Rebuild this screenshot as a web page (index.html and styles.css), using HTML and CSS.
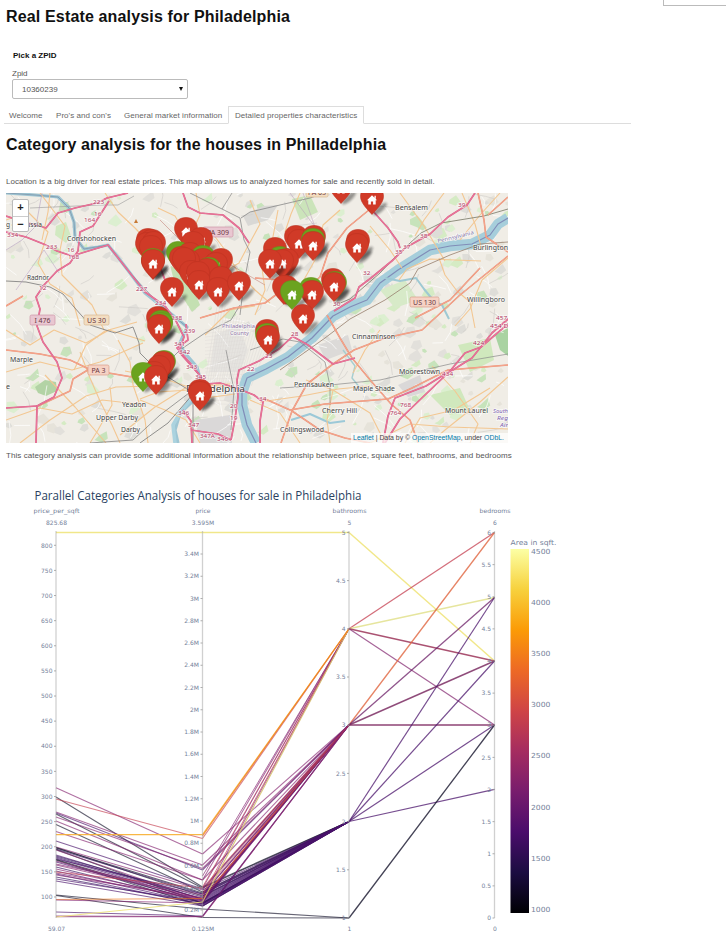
FILE: index.html
```html
<!DOCTYPE html>
<html lang="en">
<head>
<meta charset="utf-8">
<title>Real Estate analysis for Philadelphia</title>
<link rel="stylesheet" href="styles.css">
</head>
<body>
<header class="top">
  <h1>Real Estate analysis for Philadelphia</h1>
  <div class="side-box"></div>
</header>
<section class="picker">
  <strong>Pick a ZPID</strong>
  <label>Zpid</label>
  <div class="select"><span>10360239</span><i class="caret"></i></div>
</section>
<nav class="tabs">
  <a class="t1">Welcome</a><a class="t2">Pro's and con's</a><a class="t3">General market information</a><a class="active">Detailed properties characteristics</a>
</nav>
<main>
  <h2>Category analysis for the houses in Philladelphia</h2>
  <p class="intro">Location is a big driver for real estate prices. This map allows us to analyzed homes for sale and recently sold in detail.</p>
  <div class="map">
    <svg id="map" width="502" height="250" viewBox="6 193 502 250"></svg>
    <div class="zoom"><span>+</span><span>−</span></div>
    <div class="credit"><a>Leaflet</a> | Data by © <a>OpenStreetMap</a>, under <a>ODbL.</a></div>
  </div>
  <p class="note">This category analysis can provide some additional information about the relationship between price, square feet, bathrooms, and bedrooms</p>
  <svg id="chart" width="580" height="460" viewBox="0 480 580 460"></svg>
</main>
<script src="app.js"></script>
</body>
</html>
```
FILE: styles.css
```css
* { box-sizing: border-box; }
body { margin: 0; width: 726px; height: 952px; overflow: hidden; background: #fff; font-family: "Liberation Sans", sans-serif; color: #555; }
h1, h2, p { margin: 0; font-weight: normal; white-space: nowrap; }
h1, h2 { font-size: 16px; line-height: 20px; font-weight: bold; color: #111; letter-spacing: .155px; }
h1 { padding: 7px 0 0 6px; }
.top { display: flex; justify-content: space-between; height: 49px; }
.side-box { width: 63px; height: 6px; border: 1px solid #bbb; border-width: 0 0 1px 1px; }
.picker { padding-left: 12px; height: 57px; font-size: 8px; display: flex; flex-direction: column; }
.picker strong { color: #111; line-height: 14px; padding-left: 1px; }
.picker label { line-height: 10px; margin-top: 6px; }
.select { width: 176px; height: 20px; border: 1px solid #bbb; border-radius: 2px; display: flex; justify-content: space-between; align-items: center; padding: 0 4px 0 9px; }
.caret { border: 2.5px solid transparent; border-top: 4px solid #111; border-bottom: 0; }
.tabs { margin-left: 4px; width: 627px; height: 18px; border-bottom: 1px solid #ddd; display: flex; font-size: 8px; line-height: 20px; white-space: nowrap; color: #666; letter-spacing: .05px; }
.tabs a { height: 18px; padding-left: 5px; }
.t1 { width: 47px; }
.t2 { width: 68px; }
.t3 { width: 109px; }
.tabs .active { width: 136px; padding-left: 6px; border: 1px solid #ddd; border-bottom-color: #fff; line-height: 18px; }
main { padding-left: 6px; }
h2 { margin-top: 11px; letter-spacing: .14px; }
.intro { font-size: 8px; line-height: 12px; margin-top: 21px; letter-spacing: .074px; }
.map { position: relative; width: 502px; height: 250px; margin-top: 5px; overflow: hidden; }
.map svg, #chart { display: block; }
.zoom { position: absolute; left: 6px; top: 6px; width: 17px; height: 33px; background: #fff; border: 1px solid #bbb; border-radius: 2px; font: bold 11px/15px "Liberation Sans", sans-serif; color: #222; text-align: center; }
.zoom span { display: block; height: 16px; }
.zoom span + span { border-top: 1px solid #ccc; }
.credit { position: absolute; right: 0; bottom: 0; height: 10px; padding: 0 4px 0 2px; background: rgba(255,255,255,.7); font-size: 6.9px; line-height: 10px; color: #444; white-space: nowrap; }
.credit a { color: #0078a8; }
.note { font-size: 8px; line-height: 12px; margin: 7px 0 18px; letter-spacing: .073px; }
#chart { margin-left: -6px; }
#map text { font-family: "Noto Sans", sans-serif; }
#chart text { font-family: "DejaVu Sans", sans-serif; fill: #74819a; }
#chart .title { font-family: "Open Sans", sans-serif; font-size: 12px; fill: #2a3f5f; }
```
FILE: app.js
```js
const map = document.getElementById('map');
const chart = document.getElementById('chart');
let seed = 7;
const rnd = () => (seed = (seed * 16807) % 2147483647) / 2147483647;
const out = [];
const line = (pts, color, w, extra = '') => out.push(`<polyline points="${pts}" fill="none" stroke="${color}" stroke-width="${w}" stroke-linejoin="round" ${extra}/>`);

// Land cover
out.push('<rect x="6" y="193" width="502" height="250" fill="#f0ede6"/>');
const covers = ['#d5ebc4', '#dcefd0', '#c7e3bb', '#deddd8', '#e2e0db', '#e6e3da'];
for (let i = 0; i < 330; i++) {
  const x = 6 + rnd() * 502, y = 193 + rnd() * 250, s = 2 + rnd() * 6;
  out.push(`<path d="M${x} ${y}l${s} ${-s * rnd()}l${s * rnd()} ${s}l${-s * .8} ${s * .6}l${-s} ${-s * .4}z" fill="${covers[Math.floor(rnd() * 6)]}"/>`);
}
[['35,387 45,380 56,382 57,391 46,396 38,393', '#b3d3a5'], ['56,226 66,222 71,236 66,243 55,235', '#d1e9c1'], ['170,265 190,280 200,305 192,312 175,285', '#c4e0b2'],
 ['495,335 508,328 508,356 500,350', '#a9d3a2'], ['215,335 238,325 248,350 240,372 210,372', '#e6e4e0'], ['243,216 263,206 278,205 268,220 248,226', '#d9d8d5'],
 ['195,420 230,415 232,443 200,443', '#dad8d8'], ['318,345 348,335 352,350 326,360', '#dcdad8'], ['398,385 420,375 425,392 408,397', '#dad8d8'],
 ['458,345 490,338 494,360 470,372', '#d0e8bd'], ['430,395 460,388 470,410 450,415', '#d0e8bd'], ['380,290 405,280 418,300 395,308', '#d7eac8'], ['292,199 310,195 318,212 300,220', '#cbe4ba']
].forEach(a => out.push(`<polygon points="${a[0]}" fill="${a[1]}"/>`));

// Street grid
for (let i = 0; i < 230; i++) {
  const x = 6 + rnd() * 502, y = 193 + rnd() * 250, a = rnd() * 6.28, l = 8 + rnd() * 24;
  line(`${x},${y} ${x + Math.cos(a) * l * .5 + 2},${y + Math.sin(a) * l * .5} ${x + Math.cos(a) * l},${y + Math.sin(a) * l}`, i % 3 ? '#fff' : '#d3d0cb', .7);
}
for (let i = 0; i < 22; i++) {
  line(`${205 + i * 2.2},${385 + i % 4} ${218 + i * 2.4},${300 + i * 2}`, '#d9d6d3', .4);
  line(`${205},${330 + i * 3.5} ${245},${325 + i * 3.8}`, '#dddad7', .4);
}

// Water
line('6,193 35,195 58,197 69,208 74,222 75,237 84,249 98,247 108,245 117,256 130,273 145,293 160,305 175,317 187,327 180,343 184,352 197,367 201,382 194,400 180,413 175,430 178,443', '#9ec6d4', 3.2);
line('6,193 35,195 58,197 69,208 74,222 75,237 84,249 108,245 130,273 160,305 187,327', '#8096aa', .8);
line('256,443 247,425 242,405 242,393 247,378 266,369 288,357 312,338 333,316 350,307 367,300 380,283 398,270 430,250 450,246 472,244 490,235 498,224 508,218', '#a6cedb', 10.5);
line('256,443 247,425 242,405 242,393 247,378 266,369 288,357 312,338 333,316 350,307 367,300 380,283 398,270 430,250 450,246 472,244 490,235 498,224 508,218', '#818db8', 1.2);
line('385,278 400,281 416,278 424,289 433,300 442,305 449,319', '#9ec9d3', 2);
line('343,350 355,366 352,378 361,389 373,390', '#a6ced0', 1.4);
line('291,420 310,414 330,423 345,421', '#9cc9d8', 2);
line('190,400 180,413 173,425 175,443', '#abd3df', 3.6);

// Secondary roads
['40,193 65,226 60,250 62,275 92,305 104,330', '6,220 28,212 48,232 38,263 50,284 72,298 80,326', '105,193 118,212 135,228 156,250', '50,193 48,212 42,240',
 '6,372 40,362 72,370 100,362 143,343', '6,330 30,345 54,330 86,343 109,330 145,341', '74,370 86,345 105,331 137,322', '80,352 90,378 100,401 112,425 120,443', '20,443 50,420 86,396 116,387 155,386',
 '118,340 130,362 133,385 145,420 148,443', '110,387 112,405 98,430 90,443', '140,400 165,410 186,420 200,443', '45,375 75,407 106,443', '6,420 40,408 72,414 102,400 138,404',
 '250,200 260,224 248,246 239,263 210,280', '210,230 225,250 238,272 255,290 270,303', '278,210 272,242 262,268 265,290 255,315', '300,193 291,214 285,232', '340,210 323,225 315,260 301,285', '400,193 424,226 445,261', '370,226 390,250 402,268', '444,193 424,220 415,236',
 '439,258 445,275 457,291 470,302 475,328', '399,280 407,269 430,259 455,260 481,261', '306,380 333,390 370,413 385,443', '260,402 302,396 338,389 370,386', '333,390 327,420 330,443', '250,400 280,413 300,443', '380,330 365,350 353,373',
 '432,366 455,391 478,424 470,443', '508,377 480,402 445,430 430,443', '370,443 410,424 450,427 508,429', '462,193 475,224 482,250', '508,258 482,280 470,309 455,326', '405,443 420,418 454,410 490,388', '500,193 480,215 460,240', '205,335 230,310 255,306', '196,193 200,215 193,230', '158,208 175,216 184,231', '205,398 235,394', '200,384 238,388', '120,435 155,407 190,385 230,384', '125,371 165,379 200,391', '140,399 158,392 205,389'
].forEach(p => line(p, '#f3c792', 1.1));

// Railways
line('6,281 26,282 50,287 63,294 74,307', '#777', .8);
line('74,307 90,325 115,333 133,327 139,343 140,353 152,365 163,374 205,400', '#777', .8);
line('190,193 210,203 222,209 240,218 244,240 250,252 244,282 240,315', '#8b8b8b', .8);
line('222,209 232,193', '#888', .7);
line('241,218 250,212 310,198 325,193', '#888', .8);
line('155,375 180,350 205,333 231,320 240,305', '#888', .8);
line('508,209 484,216 441,223 421,233 398,254 380,273 350,299 333,306', '#776', .8);
line('508,242 480,244 450,255 418,269 410,283 385,300 350,319 325,338 280,370', '#977f6d', .8);
line('250,350 283,339 300,342 325,362 330,386 330,405', '#888', .7);
line('280,388 330,385 380,380 450,364 508,354', '#8a8a8a', .7);
line('90,443 133,440 160,415 189,393', '#777', .7);
line('140,443 168,423 193,394 193,443', '#777', .8);
line('30,208 100,205 118,205 134,196', '#999', .6);
line('226,350 234,390 231,430', '#888', .7);
line('6,250 22,240 36,226 42,193', '#aa92bb', .5);
line('16,290 44,250 59,273', '#b59bc2', .5);
line('160,220 180,240 205,250 265,285', '#cc958c', .7);
line('290,193 315,227 303,193', '#b69abb', .5);

// Trunk roads
['6,350 40,354 70,360 91,370 132,377 154,380', '36,407 70,391 73,379 91,368', '375,205 347,228 328,253 320,277 311,285', '508,256 460,295 422,330 385,338 354,350 333,364 307,384 292,411 281,443',
 '327,315 340,338 352,358 371,381 391,404 410,420 418,443', '263,398 290,410 325,404 388,399 412,388 448,370 508,365', '292,411 320,430 345,438 370,443', '478,193 484,220 486,237 508,252', '200,318 234,308 265,303 277,294', '6,306 23,296', '508,197 488,215', '415,318 450,300 480,268', '255,278 280,280 300,285'
].forEach(p => { line(p, '#e8937a', 1.6); line(p, '#f6a58c', 1); });

// Motorways
['6,216 25,222 46,228 58,213 75,208 97,203 107,198 128,193', '6,232 26,237 46,245 57,251 72,256 85,252 108,245 130,273 145,292 165,306 176,321 184,337 179,352 195,370 206,382', '109,201 93,226 80,232 78,251 70,263 57,271 44,285 36,297 40,309 37,326 43,342 57,362 62,378 54,397 37,406 36,443',
 '37,406 6,408', '183,193 188,207 200,213 223,215 239,228 249,243', '186,324 188,340 177,348 191,364 201,377 199,384', '183,410 191,421 192,443', '191,430 218,434 231,440', '231,440 235,419 238,397 237,380 239,370 259,361 279,349 292,337', '206,384 220,383 239,389 254,395 263,402 260,421 260,443', '292,336 308,345 333,364 355,358', '372,210 388,228 398,242 400,248', '475,193 467,205 448,217 430,234 405,248 393,260 371,278 359,287 355,298 334,311', '508,319 492,333 472,358 448,373 426,394 400,419 385,443', '508,324 481,347 465,353 450,371 426,386 395,398 388,416 383,443', '155,254 165,280'
].forEach(p => { line(p, '#d65e87', 1.7); line(p, '#ea7599', 1.1); });

const txt = (x, y, s, size, w, fill = '#444', extra = '') => out.push(`<text x="${x}" y="${y}" font-size="${size}" textLength="${w}" lengthAdjust="spacingAndGlyphs" fill="${fill}" stroke="#fff" stroke-opacity=".65" stroke-width="1.4" paint-order="stroke" ${extra}>${s}</text>`);
[[93, 204, 223], [94, 216, 16], [84, 222, 164], [46, 249, 233], [67, 252, 16], [68, 259, 168], [39, 290, 12], [136, 291, 227], [155, 305, 234], [171, 320, 238], [184, 333, 239], [174, 346, 341], [179, 354, 342], [186, 369, 343], [195, 379, 345], [178, 415, 346], [188, 427, 347], [200, 438, '347A'], [217, 441, 346], [230, 408, 20], [230, 420, 19], [259, 401, 34], [291, 336, 28], [265, 358, 23], [247, 371, 22], [333, 306, 30], [363, 275, 32], [395, 254, 35], [403, 249, 37], [420, 238, 38], [458, 207, 39], [473, 345, 424], [442, 376, 434], [490, 328, '454 D'], [496, 320, 457], [390, 415, 764], [400, 407, 768], [7, 237, 334]
].forEach(l => txt(l[0], l[1], l[2], 6, String(l[2]).length * 3.7, '#b13a63'));
const shield = (x, y, w, s, bg, br) => {
  out.push(`<rect x="${x}" y="${y}" width="${w}" height="10" rx="1.5" fill="${bg}" stroke="${br}" stroke-width=".7"/>`);
  out.push(`<text x="${x + w / 2}" y="${y + 7.6}" font-size="7" text-anchor="middle" fill="#6b3944">${s}</text>`);
};
shield(30, 315, 25, 'I 476', '#e9c7d1', '#cf96a8');
shield(84, 315, 25, 'US 30', '#f3ddc1', '#d7b894');
shield(88, 365, 21, 'PA 3', '#f6d2c4', '#d99f8b');
shield(203, 227, 30, 'PA 309', '#e9c7d1', '#cf96a8');
shield(410, 297, 29, 'US 130', '#f6d2c4', '#d99f8b');
shield(306, 187, 22, 'PA 63', '#f3ddc1', '#d7b894');
txt(67, 241, 'Conshohocken', 7.2, 49);
txt(6, 227, 'g of Prussia', 7.2, 36);
txt(27, 280, 'Radnor', 7.2, 22);
txt(10, 362, 'Marple', 7.2, 23);
txt(6, 389, 'e', 7.2, 4);
txt(122, 407, 'Yeadon', 7, 24);
txt(96, 420, 'Upper Darby', 7, 42);
txt(121, 432, 'Darby', 7, 19);
txt(186, 392, 'Philadelphia', 9.5, 59);
txt(395, 210, 'Bensalem', 7, 33);
txt(473, 250, 'Burlington', 7, 35);
txt(467, 302, 'Willingboro', 7, 38);
txt(352, 339, 'Cinnaminson', 7, 43);
txt(399, 374, 'Moorestown', 7, 41);
txt(294, 387, 'Pennsauken', 7, 40);
txt(353, 391, 'Maple Shade', 7, 42);
txt(322, 413, 'Cherry Hill', 7, 35);
txt(280, 432, 'Collingswood', 7, 44);
txt(445, 413, 'Mount Laurel', 7, 43);
txt(222, 328, 'Philadelphia', 6, 33, '#9178a8');
txt(230, 335, 'County', 6, 19, '#9178a8');
txt(493, 413, 'South', 5.5, 15, '#7d62b0', 'font-style="italic"');
txt(497, 420, 'Reg', 5.5, 11, '#7d62b0', 'font-style="italic"');
txt(500, 427, 'Air', 5.5, 8, '#7d62b0', 'font-style="italic"');
txt(438, 243, 'Pennsylvania', 5.5, 37, '#8576ae', 'transform="rotate(-14 438 243)"');
out.push('<path d="M134 223l2-4 2 4z" fill="#c77a35"/>');

// Markers: x, y of the icon, colour (g = green), 0 = without icon
const pin = (x, y, c, home = 1) => {
  const f = c === 'g' ? '#6ba31f' : '#d03a27', st = c === 'g' ? '#5f951c' : '#bd3222';
  out.push(`<ellipse cx="${x + 8}" cy="${y + 9}" rx="9" ry="3" fill="#111" opacity=".4" filter="url(#soft)" transform="rotate(-42 ${x + 8} ${y + 9})"/>`);
  out.push(`<path d="M${x} ${y + 14.5}C${x - 4} ${y + 10} ${x - 11.5} ${y + 3} ${x - 11.5} ${y - 3.5}C${x - 11.5} ${y - 10} ${x - 7} ${y - 14.5} ${x} ${y - 14.5}C${x + 7} ${y - 14.5} ${x + 11.5} ${y - 10} ${x + 11.5} ${y - 3.5}C${x + 11.5} ${y + 3} ${x + 4} ${y + 10} ${x} ${y + 14.5}z" fill="${f}" stroke="${st}" stroke-width=".6"/>`);
  if (home) out.push(`<path d="M${x - 5} ${y + .3}L${x} ${y - 4.8}L${x + 2.5} ${y - 2.3}V${y - 4.2}H${x + 3.8}V${y - 1}L${x + 5} ${y + .3}H${x + 3.7}V${y + 4.4}H${x + 1.1}V${y + 1.4}H${x - 1.1}V${y + 4.4}H${x - 3.7}V${y + .3}z" fill="#fff"/>`);
};
out.push('<filter id="soft" x="-30%" y="-60%" width="160%" height="220%"><feGaussianBlur stdDeviation="1"/></filter>');
[[341, 189, 'r'], [372, 200, 'r'],
 [148, 243, 'r', 0], [152, 244, 'r', 0], [147, 247, 'r', 0], [154, 246, 'r', 0], [151, 250, 'r', 0], [153, 263, 'g', 0], [153, 265, 'r', 0], [153, 264, 'r'],
 [186, 232, 'r'], [201, 242, 'r'], [193, 246, 'r', 0], [178, 256, 'g', 0], [190, 257, 'r', 0], [203, 260, 'g', 0], [181, 261, 'r', 0], [203, 263, 'r', 0], [188, 264, 'r', 0], [184, 262, 'r', 0], [221, 263, 'r', 0], [216, 267, 'r'], [209, 272, 'g', 0], [207, 273, 'r', 0], [191, 275, 'r'], [198, 276, 'r'], [199, 285, 'r'], [221, 281, 'r', 0], [218, 292, 'r'], [239, 286, 'r'], [172, 292, 'r'],
 [296, 240, 'r', 0], [299, 244, 'r'], [314, 240, 'r', 0], [313, 243, 'g', 0], [313, 246, 'r'], [358, 244, 'r', 0], [357, 248, 'r'],
 [275, 252, 'r', 0], [280, 261, 'g', 0], [287, 263, 'r'], [282, 264, 'r'], [270, 264, 'r'],
 [333, 283, 'r', 0], [335, 286, 'g', 0], [334, 287, 'r'], [286, 290, 'r', 0], [284, 290, 'r', 0], [311, 292, 'g', 0], [312, 295, 'r'], [292, 295, 'g'], [303, 319, 'r'],
 [158, 321, 'r', 0], [161, 325, 'g', 0], [161, 327, 'g', 0], [159, 329, 'r'], [267, 334, 'r', 0], [267, 338, 'g', 0], [268, 340, 'r'],
 [164, 365, 'g', 0], [163, 366, 'r', 0], [159, 370, 'r', 0], [154, 376, 'r', 0], [143, 377, 'g'], [156, 380, 'r'], [200, 394, 'r', 0], [200, 396, 'r']
].forEach(p => pin(...p));
map.innerHTML = out.join('');

// Parallel coordinates
const c = [];
const X = [56, 202.5, 349, 494.5];
const seg = (i, a, b, color, w = 1.1, o = .65) => c.push(`<line x1="${X[i]}" y1="${a}" x2="${X[i + 1]}" y2="${b}" stroke="${color}" stroke-width="${w}" opacity="${o}"/>`);
const K = '#15132b', P = '#4a136b', D = '#34105c', M = '#852470', R = '#c53f50', O = '#ed751c', Y = '#f0e57e', A = '#f8b031';
const B = { 5: 532.5, 4: 628.8, 3: 725, 2: 821.5, 1: 918 };
// left y, price y, bathrooms, colour
[[787.7, 854, 3, M], [797, 887, 2, K], [799, 838.5, 4, R], [812, 865, 3, M], [813, 870, 3, P], [814, 888, 2, K], [817, 868.5, 3, M], [821, 880, 3, M], [824.5, 892, 2, K], [831.5, 880, 4, M], [841, 889, 3, P], [847, 890, 3, M],
 [847.5, 896, 2, K], [848, 893, 2, K], [849, 894, 2, D], [849.5, 903, 2, K], [850, 900, 3, M], [855, 899, 3, P], [856, 897, 2, D], [857, 899, 2, D], [858, 901, 2, P], [859, 894, 3, P], [859.5, 903, 2, K], [860, 906, 2, K], [861, 900, 3, M], [862, 902, 3, P], [864, 895, 3, M], [865, 898, 4, M], [867, 903, 2, D], [869, 901, 3, M], [871, 904, 2, P], [873, 900, 3, M], [874, 905, 2, P], [872, 888, 3, R], [875, 898, 3, M], [877, 904, 2, D], [879, 902, 3, P], [881, 906, 2, P],
 [895, 909, 1, K], [895.5, 917.5, 1, K], [899.5, 898.5, 3, O], [900, 903, 3, M], [912, 916, 3, P], [916, 916.5, 3, M], [916.8, 916.8, 3, M]
].forEach(r => { seg(0, r[0], r[1], r[3]); seg(1, r[1], B[r[2]], r[3]); });
for (let i = 0; i < 4; i++) seg(1, 892 + i * 3, B[3], i % 2 ? M : R, 1, .5);
for (let i = 0; i < 9; i++) seg(1, 890 + i * 2, B[2], P, 1.1, .65);
[876, 887, 888.5, 895].forEach((y, i) => seg(1, y, B[4], i % 2 ? R : M, 1, .65));
seg(0, 917, 902, Y, 1.2, .9);
seg(1, 902, B[4], '#d8c270', 1.1, .9);
seg(0, 834.6, 834.6, A, 1.4, .9);
seg(1, 834.6, B[4], A, 1.2, .9);
seg(1, 836, B[4], O, 1.1, .75);
seg(0, B[5], B[5], Y, 1.5, .9);
seg(1, B[5], B[5], Y, 1.5, .9);
seg(2, B[5], 661, Y, 1.5, .9);
seg(2, B[4], 532.5, R, 1.3, .75);
seg(2, B[4], 597.5, '#e4e394', 1.5, .9);
seg(2, B[4], 661, '#96284f', 1.4, .8);
seg(2, B[4], 725, '#883076', 1.2, .75);
seg(2, B[3], 532.5, '#e0653f', 1.3, .8);
seg(2, B[3], 597.5, '#6b1d66', 1.3, .75);
seg(2, B[3], 661, '#74205a', 1.4, .8);
seg(2, B[3], 725, '#7d2860', 2, .65);
[597.5, 661, 725, 789.3].forEach(y => seg(2, B[2], y, P, 1.2, .75));
seg(2, B[1], 725, K, 1.3, .8);
X.forEach(x => c.push(`<line x1="${x}" x2="${x}" y1="531" y2="918" stroke="#999" stroke-width="1.3" opacity=".45"/>`));
const label = (x, y, s, anchor = 'middle', size = 6, w = 0) => c.push(`<text x="${x}" y="${y}" text-anchor="${anchor}" font-size="${size}" ${w ? `textLength="${w}" lengthAdjust="spacingAndGlyphs"` : ''}>${s}</text>`);
const tick = (i, y, s) => { label(X[i] - 3.5, y + 2.2, s, 'end'); c.push(`<line x1="${X[i] - 2}" x2="${X[i]}" y1="${y}" y2="${y}" stroke="#999" stroke-width=".8"/>`); };
for (let v = 800, y = 545.3; v >= 100; v -= 50, y += 25.12) tick(0, y, v);
for (let v = 34, y = 554; v >= 2; v -= 2, y += 22.25) tick(1, y, v / 10 + 'M');
for (let v = 5; v >= 1; v -= .5) tick(2, 918 - (v - 1) * 96.4, v);
for (let v = 6; v >= 0; v -= .5) tick(3, 918 - v * 64.25, v);
c.push('<text class="title" x="34.5" y="500" textLength="327" lengthAdjust="spacingAndGlyphs">Parallel Categories Analysis of houses for sale in Philadelphia</text>');
[['price_per_sqft', '825.68', '59.07', 46], ['price', '3.595M', '0.125M', 15], ['bathrooms', '5', '1', 34], ['bedrooms', '6', '0', 31]].forEach((d, i) => {
  label(X[i] + .5, 513, d[0], 'middle', 6, d[3]);
  label(X[i] + .5, 524.6, d[1]);
  label(X[i] + .5, 930.5, d[2]);
});

// Colour scale
c.push('<defs><linearGradient id="inferno" x1="0" x2="0" y1="1" y2="0">' + ['#000004', '#1b0c41', '#4a0c6b', '#781c6d', '#a52c60', '#cf4446', '#ed6925', '#fb9b06', '#f7d13d', '#fcffa4'].map((k, i) => `<stop offset="${i / 9}" stop-color="${k}"/>`).join('') + '</linearGradient></defs>');
c.push('<rect x="510.5" y="549" width="18.5" height="364" fill="url(#inferno)"/>');
label(510.5, 544.5, 'Area in sqft.', 'start', 7, 46);
for (let i = 0; i < 8; i++) label(531, 553.5 + i * 51.2, 4500 - i * 500, 'start', 7, 19.5);
chart.innerHTML = c.join('');
```
